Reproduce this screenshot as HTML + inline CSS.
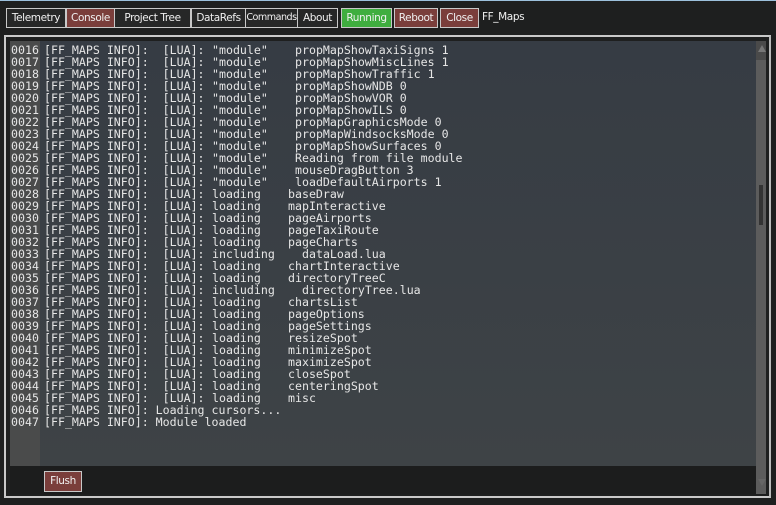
<!DOCTYPE html>
<html><head><style>
*{margin:0;padding:0;box-sizing:border-box}
body{width:776px;height:505px;background:#1e1f1f;position:relative;overflow:hidden;font-family:"DejaVu Sans","Liberation Sans",sans-serif;color:#eee}
.top{position:absolute;left:0;top:0;width:776px;height:1px;background:#9cc0dc}
.b{position:absolute;top:8px;height:20px;border:1px solid #c8c8c8;font-family:"DejaVu Sans",sans-serif;font-size:10.5px;letter-spacing:-0.4px;line-height:18px;padding:0;color:#f0f0f0;background:#262727;white-space:nowrap;text-align:center;overflow:hidden}
.red{background:#7a3e3b}
.grn{background:#3fae3f}
.frame{position:absolute;left:4px;top:35px;width:767px;height:463px;border:2px solid #c9c9c9;border-right-color:#bbb;background:#1e1f1f}
.log{position:absolute;left:10px;top:41px;width:746px;height:425px;background:linear-gradient(#363c44,#3e4346)}
.num{position:absolute;left:10px;top:41px;width:30px;height:425px;background:#4a4b4b}
.bot{position:absolute;left:10px;top:466px;width:746px;height:28px;background:#1c1d1d}
.sb{position:absolute;left:756px;top:41px;width:10px;height:453px;background:#5c5c5c}
.l{position:absolute;font-family:"DejaVu Sans Mono",monospace;font-size:11.6px;line-height:12px;color:#e6e6e6;white-space:pre}
</style></head><body>
<div class="top"></div>
<div class="b" style="left:6px;width:60px">Telemetry</div>
<div class="b red" style="left:66px;width:49px">Console</div>
<div class="b" style="left:114px;width:77px">Project Tree</div>
<div class="b" style="left:191px;width:55px">DataRefs</div>
<div class="b" style="left:245px;width:53px;font-size:9.6px;letter-spacing:-0.5px">Commands</div>
<div class="b" style="left:297px;width:41px">About</div>
<div class="b grn" style="left:341px;width:51px">Running</div>
<div class="b red" style="left:394px;width:44px">Reboot</div>
<div class="b red" style="left:440px;width:39px">Close</div>
<div style="position:absolute;left:482px;top:11px;font-size:10.5px;letter-spacing:-0.4px;color:#f0f0f0">FF_Maps</div>
<div class="frame"></div>
<div class="log"></div>
<div class="num"></div>
<div class="bot"></div>
<div class="sb"></div>
<div style="position:absolute;left:756px;top:41px;width:10px;height:19px;background:#4a4a4a"></div>
<div style="position:absolute;left:758px;top:45px;width:0;height:0;border-left:4px solid transparent;border-right:4px solid transparent;border-bottom:7px solid #777"></div>
<div style="position:absolute;left:759px;top:185px;width:4px;height:40px;background:#333"></div>
<div style="position:absolute;left:758px;top:479px;width:0;height:0;border-left:4px solid transparent;border-right:4px solid transparent;border-top:7px solid #666"></div>
<div class="b red" style="left:44px;top:471px;height:21px;width:38px;line-height:19px">Flush</div>
<div id="L"></div>
<script>
var rows=[
["module","propMapShowTaxiSigns 1",295],["module","propMapShowMiscLines 1",295],["module","propMapShowTraffic 1",295],["module","propMapShowNDB 0",295],["module","propMapShowVOR 0",295],["module","propMapShowILS 0",295],["module","propMapGraphicsMode 0",295],["module","propMapWindsocksMode 0",295],["module","propMapShowSurfaces 0",295],["module","Reading from file module",295],["module","mouseDragButton 3",295],["module","loadDefaultAirports 1",295],
["loading","baseDraw",288],["loading","mapInteractive",288],["loading","pageAirports",288],["loading","pageTaxiRoute",288],["loading","pageCharts",288],["including","dataLoad.lua",302],["loading","chartInteractive",288],["loading","directoryTreeC",288],["including","directoryTree.lua",302],["loading","chartsList",288],["loading","pageOptions",288],["loading","pageSettings",288],["loading","resizeSpot",288],["loading","minimizeSpot",288],["loading","maximizeSpot",288],["loading","closeSpot",288],["loading","centeringSpot",288],["loading","misc",288]];
var h="";
for(var i=0;i<32;i++){var y=44+i*12;var n=("00"+(16+i));
h+='<div class="l" style="left:11px;top:'+y+'px">'+n+'</div>';
if(i<30){var r=rows[i];var t=r[0]=="module"?'"module"':r[0];
h+='<div class="l" style="left:44px;top:'+y+'px">[FF_MAPS INFO]:  [LUA]:</div>';
h+='<div class="l" style="left:212px;top:'+y+'px">'+t+'</div>';
h+='<div class="l" style="left:'+r[2]+'px;top:'+y+'px">'+r[1]+'</div>';}
else h+='<div class="l" style="left:44px;top:'+y+'px">[FF_MAPS INFO]: '+(i==30?'Loading cursors...':'Module loaded')+'</div>';}
document.getElementById("L").innerHTML=h;
</script>
</body></html>
